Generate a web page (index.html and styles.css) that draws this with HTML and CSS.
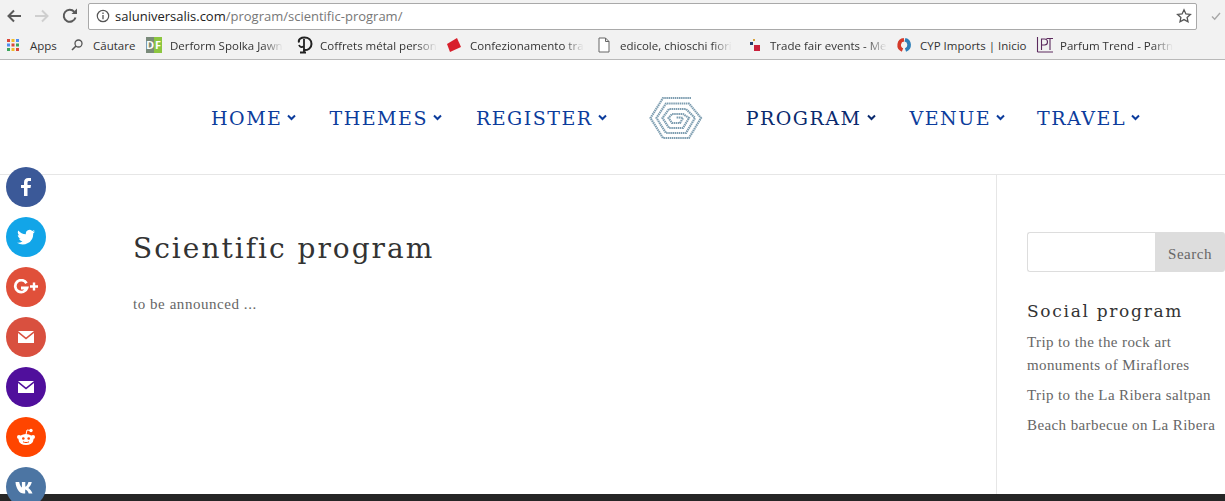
FILE: index.html
```html
<!DOCTYPE html>
<html lang="en">
<head>
    <meta charset="UTF-8">
    <title>Scientific program</title>
    <link rel="stylesheet" href="styles.css">
</head>
<body>

<!-- Browser toolbar -->
<div class="toolbar">
    <svg class="nav-icon" width="16" height="16" viewBox="0 0 16 16"><path d="M15 8H3M8 2.500 2.500 8 8 13.500" fill="none" stroke="#5a5a5a" stroke-width="2"/></svg>
    <svg class="nav-icon" width="16" height="16" viewBox="0 0 16 16"><path d="M1 8h12M8 2.500 13.500 8 8 13.500" fill="none" stroke="#cfcfcf" stroke-width="2"/></svg>
    <svg class="nav-icon" width="16" height="16" viewBox="0 0 16 16"><path d="M13.500 9.500A6 6 0 1 1 12.300 3.800" fill="none" stroke="#5a5a5a" stroke-width="2"/><path d="M9.500 6H15V.5z" fill="#5a5a5a"/></svg>
    <div class="address">
        <svg width="14" height="14" viewBox="0 0 14 14"><circle cx="7" cy="7" r="5.700" fill="none" stroke="#555" stroke-width="1.200"/><path d="M7 6v4.200M7 3.600v1.300" stroke="#555" stroke-width="1.300"/></svg>
        <span class="url">saluniversalis.com<span class="url-path">/program/scientific-program/</span></span>
        <svg class="star" width="16" height="16" viewBox="0 0 16 16"><path d="m8 1.800 1.900 4.100 4.500.5-3.300 3 .9 4.400L8 11.600l-4 2.200.9-4.400-3.300-3 4.500-.5z" fill="none" stroke="#555" stroke-width="1.300"/></svg>
    </div>
    <svg class="check" width="12" height="12" viewBox="0 0 12 12"><path d="m2 6.500 2.700 2.700L10 3" fill="none" stroke="#a8a8a8" stroke-width="1.400"/></svg>
</div>

<!-- Bookmarks -->
<div class="bookmarks">
    <a class="mark mark-apps">
        <svg width="14" height="14" viewBox="0 0 14 14">
            <g fill="#d9483b"><rect x="1" y="1" width="3" height="3"/></g><g fill="#f1bb2b"><rect x="5.500" y="1" width="3" height="3"/></g><g fill="#4f8ef0"><rect x="10" y="1" width="3" height="3"/></g>
            <g fill="#4f8ef0"><rect x="1" y="5.500" width="3" height="3"/></g><g fill="#d9483b"><rect x="5.500" y="5.500" width="3" height="3"/></g><g fill="#3ba55c"><rect x="10" y="5.500" width="3" height="3"/></g>
            <g fill="#3ba55c"><rect x="1" y="10" width="3" height="3"/></g><g fill="#f1bb2b"><rect x="5.500" y="10" width="3" height="3"/></g><g fill="#d9483b"><rect x="10" y="10" width="3" height="3"/></g>
        </svg>
        <span>Apps</span>
    </a>
    <a class="mark mark-search">
        <svg width="14" height="14" viewBox="0 0 14 14"><circle cx="8.500" cy="5.500" r="3.500" fill="none" stroke="#555" stroke-width="1.300"/><path d="M6 8 2 12" stroke="#555" stroke-width="1.600"/></svg>
        <span>Căutare</span>
    </a>
    <a class="mark mark-derform">
        <span class="df"><b>D</b><b class="df-f">F</b></span>
        <span class="fade">Derform Spolka Jawn</span>
    </a>
    <a class="mark mark-coffrets">
        <svg width="18" height="18" viewBox="0 0 18 18"><path d="M3 6.500C2 3 5 1.500 8.500 1.500c4 0 7 2.500 7 6.500s-3.500 6.500-8 6" fill="none" stroke="#222" stroke-width="2"/><path d="M8 3v13M4 16.500h6M3 9c1 2.500 3 2.500 5 1" fill="none" stroke="#222" stroke-width="1.800"/></svg>
        <span class="fade">Coffrets métal person</span>
    </a>
    <a class="mark mark-confez">
        <svg width="16" height="16" viewBox="0 0 16 16"><path d="M1 7 11 1l4 9-11 5z" fill="#d8202c"/></svg>
        <span class="fade">Confezionamento tra</span>
    </a>
    <a class="mark mark-edicole">
        <svg width="12" height="16" viewBox="0 0 12 16"><path d="M1 1h6.500L11 4.500V15H1zM7.500 1v3.500H11" fill="#fff" stroke="#666"/></svg>
        <span class="fade">edicole, chioschi fiori</span>
    </a>
    <a class="mark mark-trade">
        <svg width="16" height="16" viewBox="0 0 16 16"><rect x="8" y="8" width="6" height="6" fill="#c9213c"/><rect x="4" y="5" width="3" height="3" fill="#26406e"/><rect x="7" y="2" width="2" height="2" fill="#d8a23a"/></svg>
        <span class="fade">Trade fair events - Me</span>
    </a>
    <a class="mark mark-cyp">
        <svg width="16" height="16" viewBox="0 0 16 16"><path d="M8 2.800A5.300 5.300 0 0 0 6.500 13" fill="none" stroke="#d43a2a" stroke-width="3.600"/><path d="M9.500 13A5.300 5.300 0 0 0 9 2.800" fill="none" stroke="#2e7fb8" stroke-width="3.600"/></svg>
        <span>CYP Imports | Inicio</span>
    </a>
    <a class="mark mark-parfum">
        <svg width="18" height="18" viewBox="0 0 18 18"><path d="M1.500 1v15M17 16H1.500M5.500 14V3h3a2.500 2.500 0 0 1 0 6h-3M10.500 2.500H17M14 2.500V14" fill="none" stroke="#5c2a5e" stroke-width="1.100"/></svg>
        <span class="fade">Parfum Trend - Partn</span>
    </a>
</div>

<!-- Site header -->
<div class="site-header">
    <div class="menu">
        <a class="menu-item menu-home">HOME<svg class="chev" width="9" height="7" viewBox="0 0 9 7"><path d="m1 1.500 3.500 3.500L8 1.500" fill="none" stroke="#0c3c9c" stroke-width="2"/></svg></a>
        <a class="menu-item menu-themes">THEMES<svg class="chev" width="9" height="7" viewBox="0 0 9 7"><path d="m1 1.500 3.500 3.500L8 1.500" fill="none" stroke="#0c3c9c" stroke-width="2"/></svg></a>
        <a class="menu-item menu-register">REGISTER<svg class="chev" width="9" height="7" viewBox="0 0 9 7"><path d="m1 1.500 3.500 3.500L8 1.500" fill="none" stroke="#0c3c9c" stroke-width="2"/></svg></a>
        <svg class="logo" width="54" height="44" viewBox="0 0 54 44">
            <path d="M42 2H14L1.500 22 14 42h26l12-20-12-14.500H17L7.500 22 17 37h20l9-15-9-9H20l-6.500 9L20 32h14l6-10-6-4H23l-3.500 4 3.500 5h8l3-5-4-.5h-3" fill="none" stroke="#7d9db0" stroke-width="2.200" stroke-dasharray="1.500 .6"/>
        </svg>
        <a class="menu-item menu-program current">PROGRAM<svg class="chev" width="9" height="7" viewBox="0 0 9 7"><path d="m1 1.500 3.500 3.500L8 1.500" fill="none" stroke="#0a2a6e" stroke-width="2"/></svg></a>
        <a class="menu-item menu-venue">VENUE<svg class="chev" width="9" height="7" viewBox="0 0 9 7"><path d="m1 1.500 3.500 3.500L8 1.500" fill="none" stroke="#0c3c9c" stroke-width="2"/></svg></a>
        <a class="menu-item menu-travel">TRAVEL<svg class="chev" width="9" height="7" viewBox="0 0 9 7"><path d="m1 1.500 3.500 3.500L8 1.500" fill="none" stroke="#0c3c9c" stroke-width="2"/></svg></a>
    </div>
</div>

<!-- Page content -->
<div class="content">
    <div class="main">
        <h1>Scientific program</h1>
        <p>to be announced ...</p>
    </div>
    <div class="sidebar">
        <div class="search">
            <div class="search-input"></div>
            <div class="search-button">Search</div>
        </div>
        <h4>Social program</h4>
        <ul>
            <li>Trip to the the rock art monuments of Miraflores</li>
            <li>Trip to the La Ribera saltpan</li>
            <li>Beach barbecue on La Ribera</li>
        </ul>
    </div>
</div>

<div class="footer"></div>

<!-- Share buttons -->
<div class="share">
    <a class="circle facebook"><svg width="14" height="20" viewBox="0 0 14 20"><path d="M5 19v-8H2V8h3V5.500C5 2.500 6.500 1 9.200 1H12v3h-1.800C8.900 4 8.500 4.500 8.500 5.600V8H12l-.5 3h-3v8z" fill="#fff"/></svg></a>
    <a class="circle twitter"><svg width="20" height="17" viewBox="0 0 20 17"><path d="M19 2.500c-.7.300-1.400.5-2.100.6.800-.5 1.300-1.200 1.600-2-.7.400-1.500.7-2.300.9A3.700 3.700 0 0 0 9.900 5.300C6.800 5.100 4.100 3.700 2.300 1.500c-1 1.700-.5 3.800 1.100 4.900-.6 0-1.100-.2-1.600-.4 0 1.800 1.200 3.300 2.900 3.700-.5.100-1.100.2-1.600.1.500 1.500 1.800 2.500 3.400 2.500A7.400 7.400 0 0 1 1 13.800 10.500 10.500 0 0 0 17.200 4.500c.7-.5 1.300-1.200 1.800-2z" fill="#fff"/></svg></a>
    <a class="circle gplus"><svg width="28" height="16" viewBox="0 0 28 16"><path d="M14.500 4.200A6 6 0 1 0 15 9H9" fill="none" stroke="#fff" stroke-width="2.800"/><path d="M22 3.500v8M18 7.500h8" stroke="#fff" stroke-width="2.400"/></svg></a>
    <a class="circle gmail"><svg width="16" height="12" viewBox="0 0 16 12"><path d="M0 0h16L8 6.500zM0 2l8 6.500L16 2v10H0z" fill="#fff"/></svg></a>
    <a class="circle yahoo"><svg width="16" height="12" viewBox="0 0 16 12"><path d="M0 0h16L8 6.500zM0 2l8 6.500L16 2v10H0z" fill="#fff"/></svg></a>
    <a class="circle reddit"><svg width="20" height="18" viewBox="0 0 20 18">
        <ellipse cx="10" cy="11.500" rx="7.500" ry="5.500" fill="#fff"/><circle cx="3" cy="9" r="2" fill="#fff"/><circle cx="17" cy="9" r="2" fill="#fff"/><circle cx="15" cy="2.500" r="1.700" fill="#fff"/>
        <path d="M10 6.500 11 2l3.500.5" fill="none" stroke="#fff" stroke-width="1"/>
        <circle cx="7.300" cy="10.500" r="1.300" fill="#ff4500"/><circle cx="12.700" cy="10.500" r="1.300" fill="#ff4500"/><path d="M7 13.800c1.500 1 4.500 1 6 0" fill="none" stroke="#ff4500" stroke-width="1"/>
    </svg></a>
    <a class="circle vk"><svg width="22" height="13" viewBox="0 0 22 13"><path d="M.5 1h3.700c.5 2.800 1.600 4.800 2.700 5.500V1h3.400v4.700c1.200-.3 2.500-2.200 3.100-4.700h3.400c-.5 2.500-2 4.800-3.400 5.900 1.500.9 3.200 3 4.100 5.600h-3.800c-.6-2.100-2.100-3.600-3.500-3.900v3.900h-1.500C4.500 12.500.9 7.700.5 1z" fill="#fff"/></svg></a>
</div>

</body>
</html>
```

FILE: styles.css
```css
/* Basic Reset */
body, h1, h4, p, ul {
    margin: 0;
    padding: 0;
}

html, body {
    height: 501px;
    overflow: hidden;
}

body {
    position: relative;
    display: flex;
    flex-direction: column;
    background-color: white;
    font-family: 'Liberation Serif', serif;
}

/* Browser toolbar */
.toolbar {
    display: flex;
    align-items: center;
    height: 30px;
    padding: 2px 0 0 6px;
    box-sizing: border-box;
    background-color: #f2f2f2;
}

.nav-icon {
    margin-right: 12px;
}

.address {
    display: flex;
    align-items: center;
    width: 1109px;
    height: 27px;
    margin-left: -2px;
    padding: 0 4px 0 7px;
    box-sizing: border-box;
    background-color: white;
    border: 1px solid #a9a9a9;
    border-radius: 2px;
    font-family: 'Open Sans', sans-serif;
    font-size: 13px;
    color: #222;
}

.url {
    margin-left: 5px;
    flex: 1;
}

.url-path {
    color: #777;
}

.check {
    margin-left: 13px;
}

/* Bookmarks */
.bookmarks {
    position: relative;
    height: 30px;
    background-color: #f2f2f2;
    border-bottom: 1px solid #b9b9b9;
    box-sizing: border-box;
    font-family: 'Open Sans', sans-serif;
    font-size: 11.5px;
    color: #333;
}

.mark {
    position: absolute;
    top: 6px;
    display: flex;
    align-items: center;
    gap: 8px;
    height: 18px;
    white-space: nowrap;
}

.fade {
    display: block;
    -webkit-mask-image: linear-gradient(to right, black 82%, transparent);
    mask-image: linear-gradient(to right, black 82%, transparent);
}

.mark-apps { left: 6px; gap: 10px; }
.mark-search { left: 70px; gap: 9px; }
.mark-derform { left: 146px; }
.mark-coffrets { left: 296px; gap: 6px; }
.mark-confez { left: 446px; }
.mark-edicole { left: 598px; gap: 10px; }
.mark-trade { left: 746px; }
.mark-cyp { left: 896px; }
.mark-parfum { left: 1036px; gap: 6px; }

.df {
    display: flex;
    width: 16px;
    height: 16px;
    font-size: 11px;
    line-height: 16px;
    color: white;
    background-color: #7a8a7a;
}

.df b {
    width: 8px;
    text-align: center;
}

.df-f {
    background-color: #8cc63f;
}

/* Site header */
.site-header {
    height: 115px;
    border-bottom: 1px solid #e6e6e6;
    box-sizing: border-box;
}

.menu {
    display: flex;
    align-items: center;
    height: 114px;
    padding-left: 211px;
    padding-top: 2px;
    box-sizing: border-box;
}

.menu-item {
    display: flex;
    align-items: center;
    font-family: 'DejaVu Serif', serif;
    font-size: 19px;
    letter-spacing: 1.5px;
    color: #0c3c9c;
    white-space: nowrap;
}

.current {
    color: #0a2a6e;
}

.chev {
    margin-left: 5px;
    margin-top: -2px;
}

.menu-home { margin-right: 33px; }
.menu-themes { margin-right: 34px; }
.menu-register { margin-right: 42px; }
.menu-program { margin-left: 43px; margin-right: 34px; }
.menu-venue { margin-right: 32px; }

/* Page content */
.content {
    display: flex;
    flex: 1;
    min-height: 0;
}

.main {
    width: 997px;
    box-sizing: border-box;
    padding: 55px 0 0 133px;
    border-right: 1px solid #e6e6e6;
}

h1 {
    font-family: 'DejaVu Serif', serif;
    font-size: 28px;
    font-weight: normal;
    line-height: 38px;
    letter-spacing: 2px;
    color: #333;
}

.main p {
    margin-top: 26px;
    font-size: 15px;
    line-height: 20px;
    letter-spacing: .55px;
    color: #666;
}

.sidebar {
    flex: 1;
    padding: 57px 0 0 30px;
}

.search {
    display: flex;
    height: 40px;
}

.search-input {
    width: 127px;
    border: 1px solid #dddddd;
    border-right: none;
    border-radius: 3px 0 0 3px;
}

.search-button {
    flex: 1;
    padding-top: 5px;
    box-sizing: border-box;
    line-height: 34px;
    text-align: center;
    font-size: 15px;
    letter-spacing: .5px;
    color: #666;
    background-color: #dddddd;
    border-radius: 0 3px 3px 0;
}

h4 {
    margin-top: 27px;
    font-family: 'DejaVu Serif', serif;
    font-size: 17px;
    font-weight: normal;
    line-height: 24px;
    letter-spacing: 1.7px;
    color: #333;
}

ul {
    margin-top: 8px;
    width: 197px;
    list-style: none;
    font-size: 15px;
    line-height: 23px;
    letter-spacing: .4px;
    color: #666;
}

li {
    margin-bottom: 7px;
}

.footer {
    height: 7px;
    background-color: #262626;
}

/* Share buttons */
.share {
    position: absolute;
    top: 167px;
    left: 6px;
    display: flex;
    flex-direction: column;
    gap: 10px;
}

.circle {
    display: flex;
    align-items: center;
    justify-content: center;
    width: 40px;
    height: 40px;
    border-radius: 50%;
}

.facebook { background-color: #3b5998; }
.twitter { background-color: #12a5e8; }
.gplus { background-color: #e0503a; }
.gmail { background-color: #d9503f; }
.yahoo { background-color: #500f9c; }
.reddit { background-color: #ff4500; }
.vk { background-color: #4c75a3; }
```
